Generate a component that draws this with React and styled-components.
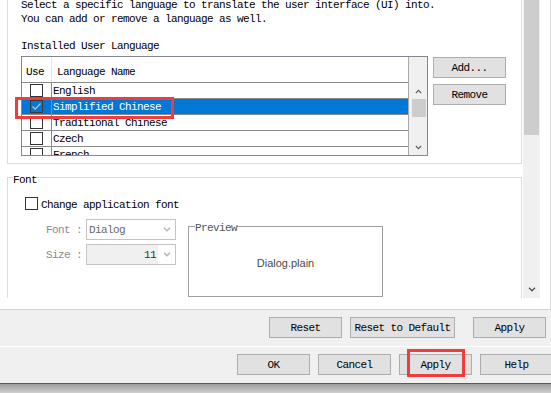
import React from "react";
import styled, { createGlobalStyle } from "styled-components";

const Global = createGlobalStyle`
  html, body { margin: 0; padding: 0; background: #fff; }
  body {
    font-family: "Liberation Mono", "Courier New", monospace;
    font-size: 11px;
    letter-spacing: -0.6px;
    color: #000;
  }
  * { box-sizing: border-box; }
`;

const Root = styled.div`
  position: relative;
  width: 551px;
  height: 393px;
  overflow: hidden;
  display: flex;
  flex-direction: column;
  background: #fff;
`;

const Main = styled.div`
  display: flex;
  align-items: flex-start;
  height: 309px;
  flex: none;
`;

const Viewport = styled.div`
  width: 523px;
  height: 298px;
  overflow: hidden;
  flex: none;
`;

const Content = styled.div`
  margin-top: -20px;
  display: flex;
  flex-direction: column;
`;

const Section = styled.div`
  margin-left: 7px;
  width: 515px;
  border: 1px solid #dcdcdc;
  padding: 17px 0 7px 13px;
`;

const Intro = styled.div`
  line-height: 14px;
  white-space: pre;
`;

const GroupLabel = styled.div`
  margin-top: 13px;
  line-height: 14px;
`;

const TableRow = styled.div`
  display: flex;
  align-items: flex-start;
  margin-top: 3px;
`;

const Table = styled.div`
  display: flex;
  width: 407px;
  height: 100px;
  border: 1px solid #828790;
  background: #fff;
`;

const TableMain = styled.div`
  width: 387px;
  display: flex;
  flex-direction: column;
  border-right: 1px solid #a9a9a9;
`;

const Header = styled.div`
  height: 26px;
  flex: none;
  display: grid;
  grid-template-columns: 30px 1fr;
  border-bottom: 1px solid #8a8a8a;
`;

const HeaderCell = styled.div`
  padding: 5px 0 0 ${(p) => p.$pad}px;
  line-height: 20px;
  border-right: ${(p) => (p.$sep ? "1px solid #e3e3e3" : "none")};
  white-space: nowrap;
`;

const Body = styled.div`
  flex: 1;
  overflow: hidden;
`;

const Row = styled.div`
  display: grid;
  grid-template-columns: 30px 1fr;
  height: 16px;
  border-bottom: 1px solid #8a8a8a;
  background: ${(p) => (p.$selected ? "#0078d7" : "#fff")};
  color: ${(p) => (p.$selected ? "#fff" : "#000")};
`;

const UseCell = styled.div`
  border-right: 1px solid #8a8a8a;
  padding: 1px 0 0 8px;
`;

const NameCell = styled.div`
  padding: 1px 0 0 1px;
  line-height: 14px;
  white-space: nowrap;
`;

const Box = styled.span`
  display: flex;
  align-items: center;
  justify-content: center;
  width: 13px;
  height: 13px;
  border: 1px solid ${(p) => (p.$selected ? "#3a3a3a" : "#333")};
  background: ${(p) => (p.$selected ? "transparent" : "#fff")};
  flex: none;
`;

const ScrollCol = styled.div`
  width: 18px;
  display: flex;
  flex-direction: column;
  background: #f0f0f0;
`;

const Corner = styled.div`
  height: 26px;
  flex: none;
  background: #f0f0f0;
`;

const ArrowBox = styled.div`
  height: ${(p) => p.$h}px;
  flex: none;
  display: flex;
  align-items: center;
  justify-content: center;
`;

const TableThumb = styled.div`
  margin-left: 3px;
  width: 14px;
  height: 18px;
  background: #cdcdcd;
  flex: none;
`;

const Fill = styled.div`
  flex: 1;
`;

const SideButtons = styled.div`
  display: flex;
  flex-direction: column;
  gap: 6px;
  margin: 1px 0 0 5px;
`;

const Button = styled.button`
  flex: none;
  width: ${(p) => p.$w || 73}px;
  height: 21px;
  margin-left: ${(p) => p.$ml || 0}px;
  padding: 2px 0 0;
  border: 1px solid #adadad;
  background: #e1e1e1;
  font: inherit;
  letter-spacing: inherit;
  line-height: 17px;
  color: #000;
  text-align: center;
  white-space: nowrap;
`;

const FontBox = styled.fieldset`
  margin: 3px 0 0 7px;
  width: 515px;
  min-width: 0;
  min-height: 200px;
  border: 1px solid #dcdcdc;
  padding: 10px 0 0 5px;
`;

const Legend = styled.legend`
  padding: ${(p) => p.$pt}px 0 0;
  margin-left: ${(p) => p.$ml || 0}px;
  line-height: 14px;
  color: ${(p) => p.$color || "#000"};
`;

const FontInner = styled.div`
  margin-left: 12px;
  display: flex;
  flex-direction: column;
`;

const CheckRow = styled.label`
  display: flex;
  align-items: flex-start;
  gap: 3px;
  height: 13px;
`;

const CheckText = styled.span`
  padding-top: 2px;
  line-height: 13px;
  white-space: nowrap;
`;

const FormArea = styled.div`
  display: flex;
  align-items: flex-start;
  margin-top: 7px;
`;

const FieldCol = styled.div`
  display: flex;
  flex-direction: column;
  gap: 4px;
  margin: 2px 0 0 21px;
`;

const FieldRow = styled.div`
  display: flex;
  align-items: stretch;
  height: 21px;
`;

const FieldLabel = styled.span`
  width: 40px;
  padding-top: 2px;
  line-height: 19px;
  color: #8a8a8a;
  white-space: pre;
`;

const Combo = styled.div`
  display: flex;
  width: 90px;
  height: 21px;
  border: 1px solid #c4c4c4;
  background: #fff;
`;

const ComboText = styled.span`
  flex: 1;
  padding: 2px 2px 0;
  line-height: 17px;
  text-align: ${(p) => p.$align || "left"};
  color: ${(p) => p.$color};
  background: ${(p) => p.$bg || "#fff"};
`;

const ComboArrow = styled.span`
  width: 17px;
  display: flex;
  align-items: center;
  justify-content: center;
  background: #fff;
`;

const Preview = styled.fieldset`
  margin: 0 0 0 12px;
  width: 195px;
  height: 80px;
  min-width: 0;
  border: 1px solid #a0a0a0;
  padding: 0;
`;

const PreviewBody = styled.div`
  height: 100%;
  display: flex;
  align-items: center;
  justify-content: center;
  padding-bottom: 5px;
  font-family: "Liberation Sans", Arial, sans-serif;
  font-size: 11px;
  letter-spacing: 0;
  color: #4a4a4a;
`;

const OuterScroll = styled.div`
  width: 17px;
  height: 298px;
  flex: none;
  display: flex;
  flex-direction: column;
  background: #f0f0f0;
`;

const OuterThumb = styled.div`
  margin-left: 1px;
  width: 15px;
  height: 135px;
  background: #cdcdcd;
  flex: none;
`;

const RightStrip = styled.div`
  width: 11px;
  height: 309px;
  flex: none;
  border-right: 1px solid #dadada;
`;

const BarA = styled.div`
  height: 38px;
  flex: none;
  display: flex;
  justify-content: flex-end;
  gap: 8px;
  padding: 7px 5px 0 0;
  background: #f0f0f0;
  border-top: 1px solid #d5d5d5;
  border-bottom: 1px solid #fff;
`;

const BarB = styled.div`
  height: 36px;
  flex: none;
  display: flex;
  gap: 8px;
  padding: 7px 0 0 237px;
  background: #f0f0f0;
`;

const Footer = styled.div`
  height: 10px;
  flex: none;
  border-top: 1px solid #5a5a5a;
  background: linear-gradient(#9d9d9d, #cfcfcf);
`;

const RedMark = styled.div`
  position: absolute;
  left: ${(p) => p.$x}px;
  top: ${(p) => p.$y}px;
  width: ${(p) => p.$w}px;
  height: ${(p) => p.$h}px;
  border: 3px solid #f03c3c;
  pointer-events: none;
`;

const Chevron = ({ dir = "down", color = "#606060", w = 8 }) => (
  <svg width={w} height="5" viewBox="0 0 8 5">
    <polyline
      points={dir === "up" ? "1,4.2 4,1.2 7,4.2" : "1,0.8 4,3.8 7,0.8"}
      fill="none"
      stroke={color}
      strokeWidth="1.4"
    />
  </svg>
);

const Check = ({ color }) => (
  <svg width="11" height="11" viewBox="0 0 11 11">
    <polyline points="1.5,5.5 4.2,8.2 9.5,2.5" fill="none" stroke={color} strokeWidth="1.2" />
  </svg>
);

const languages = [
  { name: "English", checked: false },
  { name: "Simplified Chinese", checked: true, selected: true },
  { name: "Traditional Chinese", checked: false },
  { name: "Czech", checked: false },
  { name: "French", checked: false },
];

export default function App() {
  return (
    <Root>
      <Global />
      <Main>
        <Viewport>
          <Content>
            <Section>
              <Intro>
                {"Select a specific language to translate the user interface (UI) into.\nYou can add or remove a language as well."}
              </Intro>
              <GroupLabel>Installed User Language</GroupLabel>
              <TableRow>
                <Table>
                  <TableMain>
                    <Header>
                      <HeaderCell $pad={4} $sep>Use</HeaderCell>
                      <HeaderCell $pad={5}>Language Name</HeaderCell>
                    </Header>
                    <Body>
                      {languages.map((l) => (
                        <Row key={l.name} $selected={l.selected}>
                          <UseCell>
                            <Box $selected={l.selected}>
                              {l.checked && <Check color={l.selected ? "#c8c8c8" : "#333"} />}
                            </Box>
                          </UseCell>
                          <NameCell>{l.name}</NameCell>
                        </Row>
                      ))}
                    </Body>
                  </TableMain>
                  <ScrollCol>
                    <Corner />
                    <ArrowBox $h={16}>
                      <Chevron dir="up" w={7} />
                    </ArrowBox>
                    <TableThumb />
                    <Fill />
                    <ArrowBox $h={16}>
                      <Chevron dir="down" w={7} />
                    </ArrowBox>
                  </ScrollCol>
                </Table>
                <SideButtons>
                  <Button>Add...</Button>
                  <Button>Remove</Button>
                </SideButtons>
              </TableRow>
            </Section>

            <FontBox>
              <Legend $pt={6}>Font</Legend>
              <FontInner>
                <CheckRow>
                  <Box />
                  <CheckText>Change application font</CheckText>
                </CheckRow>
                <FormArea>
                  <FieldCol>
                    <FieldRow>
                      <FieldLabel>{"Font :"}</FieldLabel>
                      <Combo>
                        <ComboText $color="#6a6a6a">Dialog</ComboText>
                        <ComboArrow>
                          <Chevron color="#b5b5b5" />
                        </ComboArrow>
                      </Combo>
                    </FieldRow>
                    <FieldRow>
                      <FieldLabel>{"Size :"}</FieldLabel>
                      <Combo>
                        <ComboText $color="#333" $align="right" $bg="#f0f0f0">11</ComboText>
                        <ComboArrow>
                          <Chevron color="#b5b5b5" />
                        </ComboArrow>
                      </Combo>
                    </FieldRow>
                  </FieldCol>
                  <Preview>
                    <Legend $pt={4} $ml={6} $color="#555">Preview</Legend>
                    <PreviewBody>Dialog.plain</PreviewBody>
                  </Preview>
                </FormArea>
              </FontInner>
            </FontBox>
          </Content>
        </Viewport>
        <OuterScroll>
          <OuterThumb />
          <Fill />
          <ArrowBox $h={17}>
            <Chevron dir="down" color="#555" />
          </ArrowBox>
        </OuterScroll>
        <RightStrip />
      </Main>
      <BarA>
        <Button>Reset</Button>
        <Button $w={105}>Reset to Default</Button>
        <Button $ml={10}>Apply</Button>
      </BarA>
      <BarB>
        <Button>OK</Button>
        <Button>Cancel</Button>
        <Button>Apply</Button>
        <Button>Help</Button>
      </BarB>
      <Footer />
      <RedMark $x={15} $y={97} $w={159} $h={22} />
      <RedMark $x={407} $y={349} $w={58} $h={28} />
    </Root>
  );
}
